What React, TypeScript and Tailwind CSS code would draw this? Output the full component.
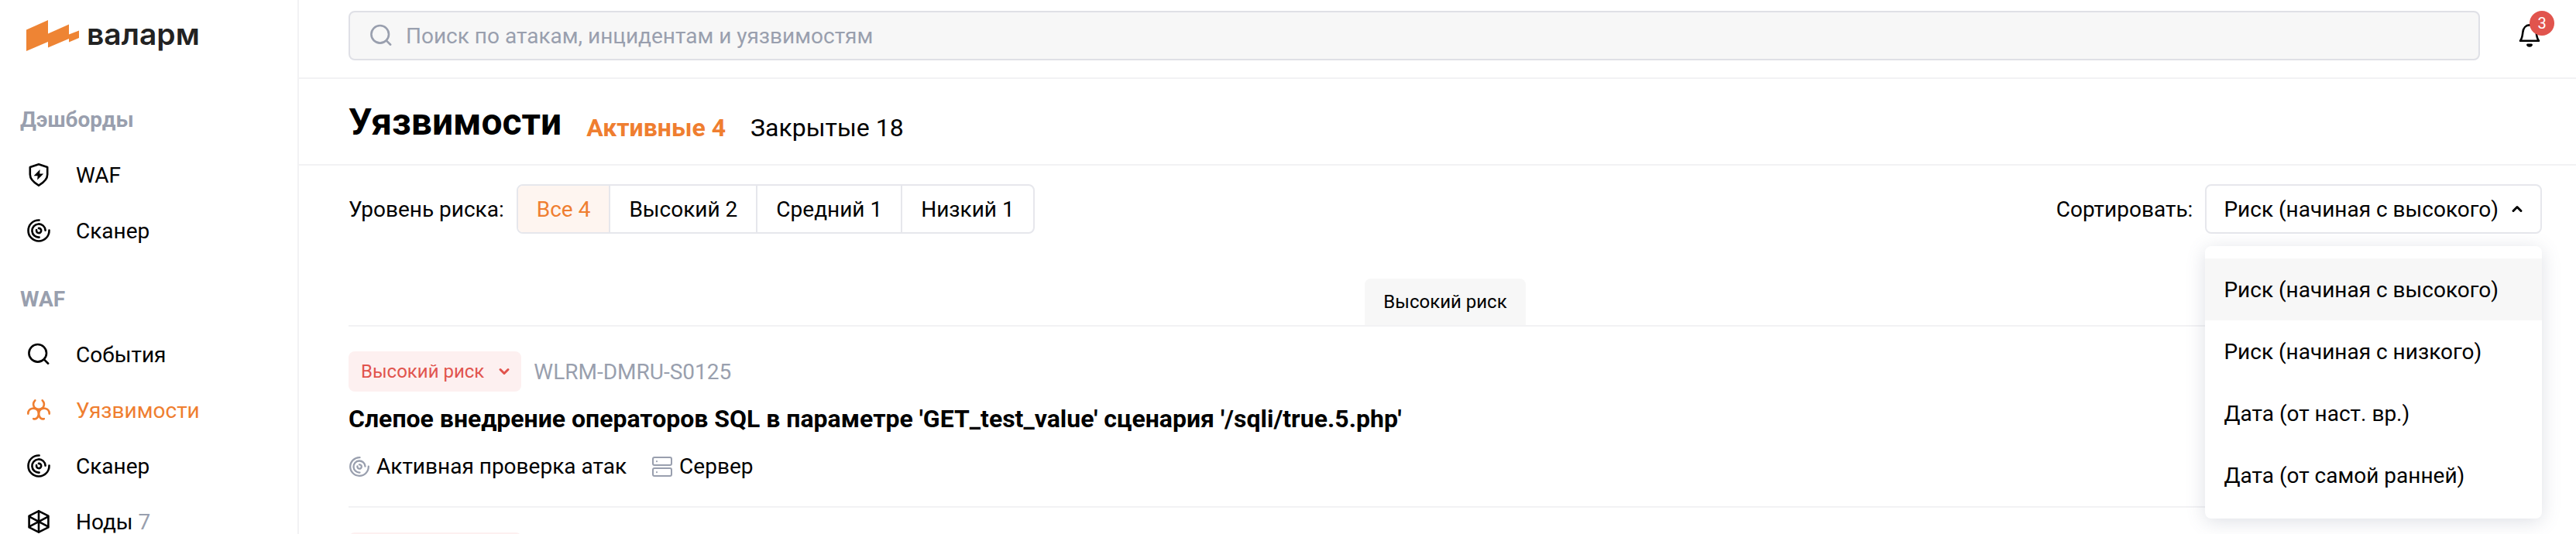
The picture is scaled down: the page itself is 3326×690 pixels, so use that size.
import React, { useState } from "react";

type IconProps = { className?: string };

const stroke = {
  fill: "none",
  stroke: "currentColor",
  strokeLinecap: "round" as const,
  strokeLinejoin: "round" as const,
};

function ShieldIcon({ className }: IconProps) {
  return (
    <svg viewBox="0 0 32 32" className={className} aria-hidden="true">
      <path {...stroke} strokeWidth="2.6" d="M16 2.300 27.200 6V15.500c0 6.500-5 10.500-11.200 14.100C9.800 26 4.800 22 4.800 15.500V6Z" />
      <path fill="currentColor" d="M17.600 9 9.600 17.200h5L14.200 22.600l8-8.200h-5Z" />
    </svg>
  );
}

function ScannerIcon({ className }: IconProps) {
  return (
    <svg viewBox="0 0 32 32" className={className} aria-hidden="true">
      <g {...stroke} strokeWidth="2.6">
        <path d="M16.600 2.500A13.500 13.500 0 1 0 29.500 15.600" />
        <path d="M24.600 15.600A8.600 8.600 0 1 0 16.600 24.600" />
        <path d="M15.900 12.900A3.100 3.100 0 1 1 13.100 15.200" />
      </g>
    </svg>
  );
}

function SearchIcon({ className }: IconProps) {
  return (
    <svg viewBox="0 0 32 32" className={className} aria-hidden="true">
      <g {...stroke} strokeWidth="2.6">
        <circle cx="14.700" cy="14.300" r="11.300" />
        <path d="m22.800 22.400 5.400 5.300" />
      </g>
    </svg>
  );
}

function BiohazardIcon({ className }: IconProps) {
  return (
    <svg viewBox="0 0 32 32" className={className} aria-hidden="true">
      <g {...stroke} strokeWidth="2.6">
        <path d="M11.300 3.300C7 8 9.400 14.800 16 14.800S25 8 20.700 3.300" />
        <path d="M2.300 20.600C2.300 12.600 12.600 11.600 15.200 17.200 17.200 21.600 14.600 28.600 9.200 27.200" />
        <path d="M29.700 20.600C29.700 12.600 19.400 11.600 16.800 17.200 14.800 21.600 17.400 28.600 22.800 27.200" />
      </g>
    </svg>
  );
}

function NodeIcon({ className }: IconProps) {
  return (
    <svg viewBox="0 0 32 32" className={className} aria-hidden="true">
      <g {...stroke} strokeWidth="2.6">
        <path d="M16 2.400 28.400 8.600V23.400L16 29.600 3.600 23.400V8.600Z" />
        <path d="M16 2.400V29.600M4 9.600l24 12.800M28 9.600 4 22.400" />
      </g>
    </svg>
  );
}

function ServerIcon({ className }: IconProps) {
  return (
    <svg viewBox="0 0 28 28" className={className} aria-hidden="true">
      <g {...stroke} strokeWidth="2">
        <rect x="2" y="2" width="24" height="10" rx="2" />
        <rect x="2" y="16" width="24" height="10" rx="2" />
        <path d="M7 7v.2M7 21v.2" />
      </g>
    </svg>
  );
}

function BellIcon({ className }: IconProps) {
  return (
    <svg viewBox="0 0 32 32" className={className} aria-hidden="true">
      <path
        {...stroke}
        strokeWidth="2.6"
        d="M4 22.800h24C25.400 19.500 25.200 16 24.700 11.800 24.200 6.300 20.800 2.400 16 2.400S7.800 6.300 7.300 11.800C6.800 16 6.600 19.500 4 22.800Z"
      />
      <path {...stroke} strokeWidth="3" d="M13.500 28c.8 1.800 4.200 1.800 5 0Z" />
    </svg>
  );
}

function Chevron({ className }: IconProps) {
  return (
    <svg viewBox="0 0 20 20" className={className} aria-hidden="true">
      <path {...stroke} strokeWidth="3" d="m5 7.500 5 5 5-5" />
    </svg>
  );
}

function Logo() {
  return (
    <a href="#home" className="flex items-center gap-[10px] px-[34px] text-[#222]">
      <svg viewBox="0 0 68 40" className="h-10 w-[68px]" aria-hidden="true">
        <path fill="#ee8434" d="M0 12.500 28 0v17.500L55 5.500v13L68 13.500v9.500L55 28.500V24L28 35.500V28L0 40Z" />
      </svg>
      <span className="pb-1 font-[Inter,sans-serif] text-[39px] leading-[44px] font-semibold">валарм</span>
    </a>
  );
}

type Item = { label: string; icon: (p: IconProps) => React.ReactNode; active?: boolean; count?: number };

const sections: { title: string; items: Item[] }[] = [
  {
    title: "Дэшборды",
    items: [
      { label: "WAF", icon: ShieldIcon },
      { label: "Сканер", icon: ScannerIcon },
    ],
  },
  {
    title: "WAF",
    items: [
      { label: "События", icon: SearchIcon },
      { label: "Уязвимости", icon: BiohazardIcon, active: true },
      { label: "Сканер", icon: ScannerIcon },
      { label: "Ноды", icon: NodeIcon, count: 7 },
    ],
  },
];

const levels = ["Все 4", "Высокий 2", "Средний 1", "Низкий 1"];
const sorts = ["Риск (начиная с высокого)", "Риск (начиная с низкого)", "Дата (от наст. вр.)", "Дата (от самой ранней)"];

function RiskBadge() {
  return (
    <button type="button" className="flex h-[52px] items-center gap-4 rounded-lg bg-[#fdf0f0] pr-3 pl-4 text-2xl text-[#e1544d]">
      Высокий риск
      <Chevron className="size-5" />
    </button>
  );
}

export default function App() {
  const [level, setLevel] = useState(0);
  const [sort, setSort] = useState(0);
  const [open, setOpen] = useState(true);

  return (
    <div className="flex h-screen overflow-hidden bg-white font-[Roboto,sans-serif] text-[28px] leading-[41px] text-black">
      <aside className="w-[386px] shrink-0 overflow-hidden border-r-2 border-[#f2f2f4] pt-[22px]">
        <Logo />
        <nav className="mt-16">
          {sections.map((s) => (
            <section key={s.title} className="mb-8">
              <h2 className="px-[26px] pb-[15px] font-bold text-[#999fae]">{s.title}</h2>
              <ul>
                {s.items.map((it) => (
                  <li key={it.label}>
                    <a
                      href="#section"
                      className={`flex h-[72px] items-center gap-8 px-[34px] ${it.active ? "text-[#ef7e30]" : ""}`}
                    >
                      <it.icon className="size-8" />
                      <span>
                        {it.label}
                        {it.count && <span className="text-[#999fae]"> {it.count}</span>}
                      </span>
                    </a>
                  </li>
                ))}
              </ul>
            </section>
          ))}
        </nav>
      </aside>

      <main className="min-w-0 flex-1">
        <header className="flex items-start gap-12 border-b-2 border-[#f2f2f4] pt-[14px] pr-11 pb-[22px] pl-16">
          <label className="flex h-16 flex-1 items-center gap-4 rounded-lg border-2 border-[#dfe0e6] bg-[#f7f7f7] px-6 text-[#999fae]">
            <SearchIcon className="size-8" />
            <input
              type="search"
              aria-label="Поиск"
              placeholder="Поиск по атакам, инцидентам и уязвимостям"
              className="min-w-0 flex-1 bg-transparent outline-none placeholder:text-[#999fae]"
            />
          </label>
          <button type="button" aria-label="Уведомления" className="relative mt-4 size-8">
            <BellIcon className="size-8" />
            <span className="absolute -top-4 left-4 flex size-8 items-center justify-center rounded-full bg-[#e1544d] text-xl text-white">
              3
            </span>
          </button>
        </header>

        <div className="flex h-28 items-end gap-8 border-b-2 border-[#f2f2f4] pr-11 pb-6 pl-16">
          <h1 className="text-5xl leading-[60px] font-bold">Уязвимости</h1>
          <a href="#active" className="text-[32px] leading-[46px] font-bold text-[#ef7e30]">Активные 4</a>
          <a href="#closed" className="text-[32px] leading-[46px]">Закрытые 18</a>
        </div>

        <div className="flex items-center justify-between pt-6 pr-11 pl-16">
          <div className="flex items-center gap-4">
            <span>Уровень риска:</span>
            <div className="flex h-16 divide-x-2 divide-[#e6e7ec] overflow-hidden rounded-lg border-2 border-[#e6e7ec]">
              {levels.map((l, i) => (
                <button
                  key={l}
                  type="button"
                  onClick={() => setLevel(i)}
                  className={`px-6 ${i === level ? "bg-[#fef5f0] text-[#ef7e30]" : ""}`}
                >
                  {l}
                </button>
              ))}
            </div>
          </div>
          <div className="flex items-center gap-4">
            <span>Сортировать:</span>
            <div className="relative">
              <button
                type="button"
                aria-haspopup="listbox"
                aria-expanded={open}
                onClick={() => setOpen(!open)}
                className="flex h-16 items-center gap-[14px] rounded-lg border-2 border-[#e6e7ec] pr-5 pl-[22px]"
              >
                {sorts[sort]}
                <Chevron className="size-5 rotate-180" />
              </button>
              {open && (
                <ul
                  role="listbox"
                  className="absolute top-20 right-0 left-0 z-10 rounded-lg bg-white py-4 shadow-[0_4px_24px_rgba(90,100,130,0.2)]"
                >
                  {sorts.map((s, i) => (
                    <li key={s} role="option" aria-selected={i === sort}>
                      <button
                        type="button"
                        onClick={() => setSort(i)}
                        className={`h-20 w-full px-6 text-left ${i === sort ? "bg-[#f7f7f7]" : ""}`}
                      >
                        {s}
                      </button>
                    </li>
                  ))}
                </ul>
              )}
            </div>
          </div>
        </div>

        <div className="mt-[58px] pr-11 pl-16">
          <div className="flex justify-center border-b-2 border-[#f2f2f4]">
            <h2 className="rounded-t-lg bg-[#f7f7f7] px-6 py-[10px] text-2xl leading-10">Высокий риск</h2>
          </div>
          <article className="border-b-2 border-[#f2f2f4] pt-8 pb-[31px]">
            <div className="flex items-center gap-4">
              <RiskBadge />
              <span className="text-[#999fae]">WLRM-DMRU-S0125</span>
            </div>
            <h3 className="mt-4 text-[32px] leading-[38px] font-bold">
              Слепое внедрение операторов SQL в параметре 'GET_test_value' сценария '/sqli/true.5.php'
            </h3>
            <div className="mt-[22px] flex gap-8">
              <span className="flex items-center gap-2">
                <ScannerIcon className="size-7 text-[#999fae]" />
                Активная проверка атак
              </span>
              <span className="flex items-center gap-2">
                <ServerIcon className="size-7 text-[#999fae]" />
                Сервер
              </span>
            </div>
          </article>
          <article className="pt-8" aria-label="Следующая уязвимость">
            <div className="h-[52px] w-56 rounded-lg bg-[#fdf0f0]" />
          </article>
        </div>
      </main>
    </div>
  );
}
